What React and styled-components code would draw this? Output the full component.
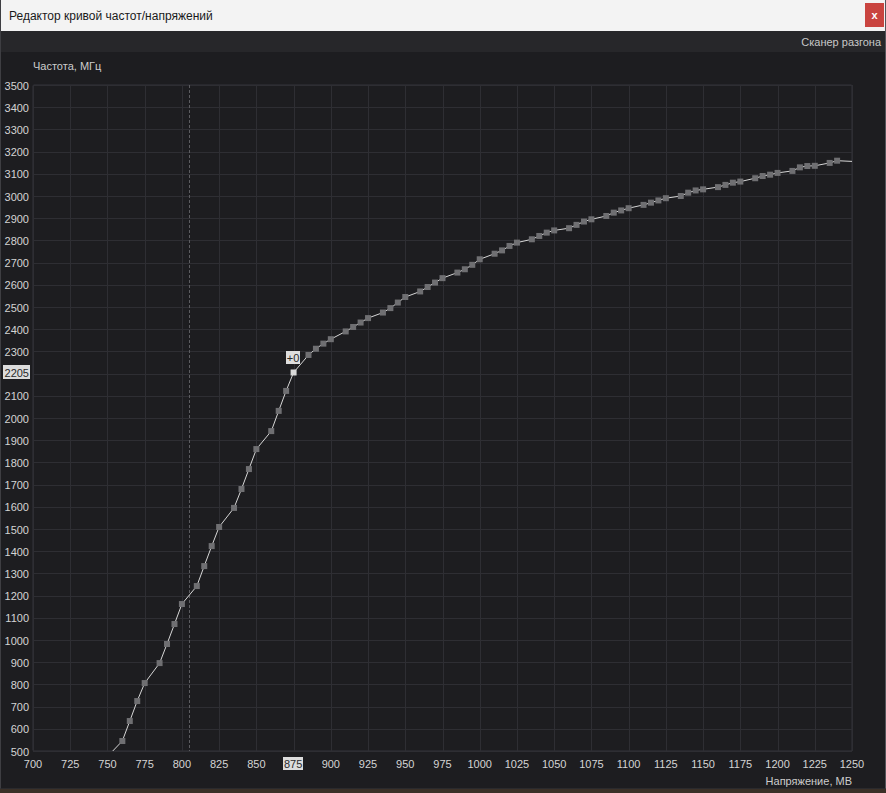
import React from "react";
import styled, { createGlobalStyle } from "styled-components";

const Global = createGlobalStyle`
  html, body { margin: 0; padding: 0; background: #3b3027; }
  body { font-family: "Liberation Sans", Arial, sans-serif; }
`;

const Window = styled.div`
  width: 886px;
  height: 789px;
  box-sizing: border-box;
  display: flex;
  flex-direction: column;
  background: #1d1d20;
  border-left: 1px solid #3e3e42;
  border-right: 1px solid #55555a;
  border-bottom: 1px solid #2a2a2d;
  overflow: hidden;
`;

const TitleBar = styled.div`
  height: 31px;
  flex: none;
  display: flex;
  align-items: center;
  justify-content: space-between;
  background: #f3f3f3;
  padding: 0 1px 0 8px;
`;

const Title = styled.span`
  font-size: 12px;
  color: #1a1a1a;
`;

const CloseButton = styled.div`
  width: 19px;
  height: 24px;
  margin-top: -2px;
  background: #c9443f;
  color: #ffffff;
  font-size: 11px;
  font-weight: 700;
  display: flex;
  align-items: center;
  justify-content: center;
`;

const Toolbar = styled.div`
  height: 21px;
  flex: none;
  display: flex;
  align-items: center;
  justify-content: flex-end;
  padding-right: 4px;
  background: #27272a;
`;

const ToolLink = styled.span`
  font-size: 11px;
  color: #c8c8c8;
`;

const ChartArea = styled.div`
  flex: 1;
  display: flex;
  flex-direction: column;
  min-height: 0;
  background: #1d1d20;
`;

const AxisTitle = styled.div`
  height: ${(p) => (p.$right ? "16px" : "23px")};
  flex: none;
  display: flex;
  align-items: center;
  justify-content: ${(p) => (p.$right ? "flex-end" : "flex-start")};
  padding: ${(p) => (p.$right ? "2px 33px 0 0" : "5px 0 0 32px")};
  box-sizing: border-box;
  font-size: 11px;
  line-height: 13px;
  color: #cccccc;
`;

const Svg = styled.svg`
  display: block;
  flex: none;
`;

const L = 33, R = 852, T = 85, B = 751;
const xs = (mv) => L + ((mv - 700) / 550) * (R - L);
const ys = (f) => B - ((f - 500) / 3000) * (B - T);

const data = [
  [750, 475], [760, 545], [765, 635], [770, 725], [775, 806], [785, 896], [790, 982],
  [795, 1072], [800, 1162], [810, 1243], [815, 1333], [820, 1423], [825, 1509],
  [835, 1595], [840, 1680], [845, 1770], [850, 1860], [860, 1941], [865, 2032],
  [870, 2122], [875, 2205], [885, 2284], [890, 2312], [895, 2335], [900, 2355],
  [910, 2390], [915, 2410], [920, 2430], [925, 2450], [935, 2475], [940, 2495],
  [945, 2520], [950, 2545], [960, 2570], [965, 2590], [970, 2610], [975, 2630],
  [985, 2655], [990, 2670], [995, 2690], [1000, 2715], [1010, 2740], [1015, 2755],
  [1020, 2775], [1025, 2790], [1035, 2805], [1040, 2820], [1045, 2835], [1050, 2845],
  [1060, 2855], [1065, 2870], [1070, 2885], [1075, 2895], [1085, 2910], [1090, 2925],
  [1095, 2935], [1100, 2945], [1110, 2960], [1115, 2970], [1120, 2980], [1125, 2990],
  [1135, 3000], [1140, 3015], [1145, 3025], [1150, 3030], [1160, 3040], [1165, 3050],
  [1170, 3060], [1175, 3065], [1185, 3080], [1190, 3090], [1195, 3096], [1200, 3104],
  [1210, 3113], [1215, 3129], [1220, 3135], [1225, 3136], [1235, 3149], [1240, 3159],
];
const lineEnd = [1250, 3156];

const yTicks = Array.from({ length: 31 }, (_, i) => 500 + i * 100);
const xTicks = Array.from({ length: 23 }, (_, i) => 700 + i * 25);

const labelFont = { fontFamily: "'Liberation Sans', Arial, sans-serif", fontSize: 11 };

function Chart() {
  const path = [...data, lineEnd]
    .map(([v, f], i) => `${i ? "L" : "M"}${xs(v).toFixed(1)} ${ys(f).toFixed(1)}`)
    .join(" ");
  const selX = xs(875);
  const selY = ys(2205);
  return (
    <Svg width="884" height="697" viewBox="1 75 884 697">
      <defs>
        <clipPath id="plot">
          <rect x={L} y={T} width={R - L} height={B - T} />
        </clipPath>
      </defs>
      <rect x={L} y={T} width={R - L} height={B - T} fill="#1d1d20" stroke="#34343a" strokeWidth="1" rx="1" />
      {yTicks.map((f) => (
        <line key={"h" + f} x1={L} x2={R} y1={Math.round(ys(f)) + 0.5} y2={Math.round(ys(f)) + 0.5} stroke="#2e2e33" strokeWidth="1" />
      ))}
      {xTicks.map((v) => (
        <line key={"v" + v} x1={Math.round(xs(v)) + 0.5} x2={Math.round(xs(v)) + 0.5} y1={T} y2={B} stroke="#2e2e33" strokeWidth="1" />
      ))}
      <line x1="189.5" x2="189.5" y1={T} y2={B} stroke="#5c5c60" strokeWidth="1" strokeDasharray="3 2" />
      <g clipPath="url(#plot)">
        <path d={path} fill="none" stroke="#d6d6d6" strokeWidth="1" />
        {data.map(([v, f]) =>
          v === 875 ? null : (
            <rect key={"p" + v} x={xs(v) - 3} y={ys(f) - 3} width="6" height="6" fill="#6f6f72" />
          )
        )}
        <rect x={selX - 3} y={selY - 3} width="6" height="6" fill="#d9d9d9" />
      </g>
      {yTicks.map((f) =>
        f === 2200 ? null : (
          <text key={"yl" + f} x="29" y={ys(f) + 0.5} textAnchor="end" dominantBaseline="central" fill="#d4d4d4" style={labelFont}>
            {f}
          </text>
        )
      )}
      <rect x="3" y="365" width="27" height="14" fill="#dcdcdc" />
      <text x="29" y="372.5" textAnchor="end" dominantBaseline="central" fill="#2a2a2a" style={labelFont}>2205</text>
      {xTicks.map((v) =>
        v === 875 ? null : (
          <text key={"xl" + v} x={xs(v)} y="764" textAnchor="middle" dominantBaseline="central" fill="#d4d4d4" style={labelFont}>
            {v}
          </text>
        )
      )}
      <rect x="283" y="757" width="20" height="13" fill="#dcdcdc" />
      <text x={selX - 0.5} y="764" textAnchor="middle" dominantBaseline="central" fill="#2a2a2a" style={labelFont}>875</text>
      <rect x="286" y="351" width="14" height="13" fill="#dedede" />
      <text x="293" y="357.5" textAnchor="middle" dominantBaseline="central" fill="#2a2a2a" style={labelFont}>+0</text>
    </Svg>
  );
}

export default function App() {
  return (
    <>
      <Global />
      <Window>
        <TitleBar>
          <Title>Редактор кривой частот/напряжений</Title>
          <CloseButton>x</CloseButton>
        </TitleBar>
        <Toolbar>
          <ToolLink>Сканер разгона</ToolLink>
        </Toolbar>
        <ChartArea>
          <AxisTitle>Частота, МГц</AxisTitle>
          <Chart />
          <AxisTitle $right>Напряжение, МВ</AxisTitle>
        </ChartArea>
      </Window>
    </>
  );
}
